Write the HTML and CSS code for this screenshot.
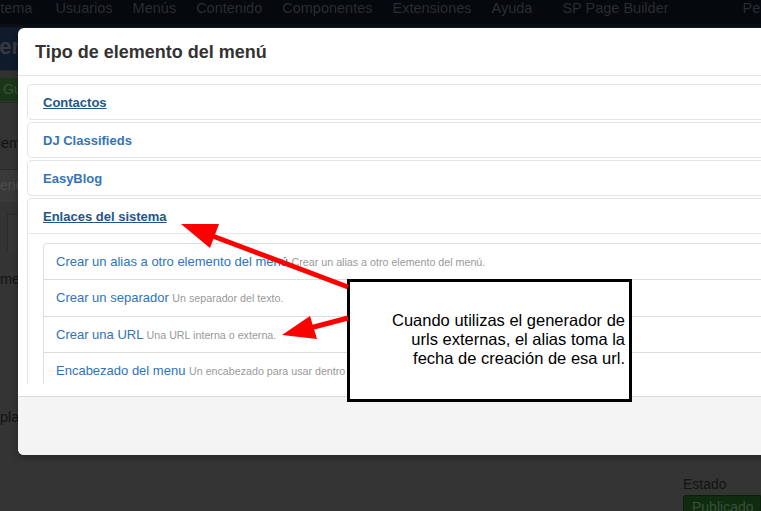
FILE: index.html
```html
<!DOCTYPE html>
<html lang="es">
<head>
<meta charset="utf-8">
<title>Tipo de elemento del menú</title>
<link rel="stylesheet" href="styles.css">
</head>
<body>
<div class="admin">
  <nav class="topnav">
    <span class="nav-item first">Sistema</span>
    <span class="nav-item">Usuarios</span>
    <span class="nav-item">Menús</span>
    <span class="nav-item">Contenido</span>
    <span class="nav-item">Componentes</span>
    <span class="nav-item">Extensiones</span>
    <span class="nav-item wide">Ayuda</span>
    <span class="nav-item sp">SP Page Builder</span>
    <span class="nav-item">Perfil</span>
  </nav>
  <header class="titlebar"><h1 class="page-title">Menú: Editar elemento</h1></header>
  <div class="toolbar"><span class="btn-save">Guardar</span></div>
  <div class="content">
    <div class="left-col">
      <div class="lbl lbl-first">Elemento</div>
      <div class="fake-input">General</div>
      <div class="fake-tab"></div>
      <div class="lbl lbl-menu">menú</div>
      <div class="lbl lbl-tpl">plantilla</div>
    </div>
    <div class="right-col">
      <div class="lbl-estado">Estado</div>
      <div class="btn-status">Publicado</div>
    </div>
  </div>
</div>

<div class="modal">
  <div class="modal-header"><h3 class="modal-title">Tipo de elemento del menú</h3></div>
  <div class="modal-body">
    <div class="scroll">
      <div class="group"><a class="toggle active">Contactos</a></div>
      <div class="group"><a class="toggle">DJ Classifieds</a></div>
      <div class="group"><a class="toggle">EasyBlog</a></div>
      <div class="group">
        <a class="toggle active">Enlaces del sistema</a>
        <div class="inner">
          <ul class="types">
            <li><a class="type"><span>Crear un alias a otro elemento del menú</span> <small class="desc">Crear un alias a otro elemento del menú.</small></a></li>
            <li><a class="type"><span>Crear un separador</span> <small class="desc">Un separador del texto.</small></a></li>
            <li><a class="type"><span>Crear una URL</span> <small class="desc">Una URL interna o externa.</small></a></li>
            <li><a class="type"><span>Encabezado del menu</span> <small class="desc">Un encabezado para usar dentro de los menús.</small></a></li>
            <li><a class="type"><span>Envoltura del iframe</span> <small class="desc">Muestra una URL en un iframe.</small></a></li>
          </ul>
        </div>
      </div>
    </div>
  </div>
  <div class="modal-footer"></div>
</div>

<div class="note">Cuando utilizas el generador de<br>urls externas, el alias toma la<br>fecha de creación de esa url.</div>

<svg class="arrows" width="761" height="511" viewBox="0 0 761 511">
  <line x1="348" y1="287" x2="210" y2="235" stroke="#ff0000" stroke-width="5"/>
  <polygon points="181,224 219,224 210,248" fill="#ff0000"/>
  <line x1="348" y1="318" x2="310" y2="328" stroke="#ff0000" stroke-width="5"/>
  <polygon points="282,335 310,316 317,339" fill="#ff0000"/>
</svg>
</body>
</html>
```

FILE: styles.css
```css
html, body {
  margin: 0;
  padding: 0;
}
body {
  width: 761px;
  height: 511px;
  overflow: hidden;
  position: relative;
  background: #343434;
  font-family: "Liberation Sans", Arial, sans-serif;
}

/* background admin page (dimmed) */
.topnav {
  height: 24px;
  background: #05080c;
  display: flex;
  align-items: flex-start;
  white-space: nowrap;
  font-size: 14.5px;
  line-height: 16px;
  color: #2a2d31;
  overflow: hidden;
}
.nav-item { margin-right: 20px; }
.nav-item.first { margin-left: -20px; margin-right: 23px; }
.nav-item.wide { margin-right: 30px; }
.nav-item.sp { margin-right: 74px; }

.titlebar {
  height: 46px;
  background: #0f1b2a;
  border-top: 3px solid #0a0f16;
  box-sizing: border-box;
  overflow: hidden;
}
.page-title {
  margin: 0 0 0 -19px;
  font-size: 22px;
  line-height: 40px;
  color: #363a40;
  white-space: nowrap;
}
.toolbar {
  height: 33px;
  background: #313131;
  border-top: 1px solid #262626;
  border-bottom: 1px solid #2a2a2a;
  box-sizing: border-box;
  padding-top: 7px;
}
.btn-save {
  display: inline-block;
  height: 23px;
  line-height: 23px;
  padding: 0 12px 0 3px;
  background: #1a3618;
  color: #375336;
  font-size: 14px;
  border-radius: 0 3px 3px 0;
}
.content {
  display: flex;
  justify-content: space-between;
}
.left-col { width: 120px; }
.lbl {
  font-size: 14.5px;
  line-height: 18px;
  color: #121212;
  white-space: nowrap;
}
.lbl-first { margin: 31px 0 0 -12px; }
.fake-input {
  margin-top: 17px;
  height: 33px;
  box-sizing: border-box;
  border-top: 1px solid #2a2a2a;
  background: #393939;
  color: #4e4e4e;
  font-size: 14px;
  line-height: 30px;
  margin-left: -11px;
}
.fake-tab {
  margin: 12px 0 0 7px;
  height: 36px;
  border-left: 1px solid #2a2a2a;
  border-top: 1px solid #2a2a2a;
  background: #363636;
}
.lbl-menu { margin-top: 19px; }
.lbl-tpl { margin-top: 120px; }

.right-col {
  width: 78px;
  padding-top: 372px;
}
.lbl-estado {
  font-size: 14px;
  line-height: 18px;
  color: #131313;
}
.btn-status {
  margin-top: 2px;
  height: 24px;
  background: #0f2b10;
  border: 1px solid #0b200c;
  border-radius: 3px 0 0 3px;
  color: #37513a;
  font-size: 14px;
  line-height: 22px;
  padding-left: 8px;
}

/* modal */
.modal {
  position: absolute;
  left: 18px;
  top: 28px;
  width: 820px;
  height: 427px;
  background: #fff;
  border-radius: 6px;
  box-shadow: 0 3px 7px rgba(0, 0, 0, 0.3);
  display: flex;
  flex-direction: column;
  overflow: hidden;
}
.modal-header {
  padding: 9px 17px 8px;
  border-bottom: 1px solid #e5e5e5;
}
.modal-title {
  margin: 0;
  font-size: 18px;
  font-weight: bold;
  line-height: 30px;
  color: #333;
}
.modal-body {
  height: 320px;
  box-sizing: border-box;
  padding: 8px 0 12px 9px;
}
.scroll {
  height: 300px;
  overflow: hidden;
}
.group {
  border: 1px solid #e5e5e5;
  border-radius: 4px;
  margin-bottom: 2px;
}
.toggle {
  display: block;
  padding: 9px 15px 7px;
  line-height: 18px;
  font-size: 13px;
  font-weight: bold;
  color: #3575b6;
  text-decoration: none;
}
.toggle.active {
  color: #22568a;
  text-decoration: underline;
}
.inner {
  border-top: 1px solid #e5e5e5;
  padding: 9px 15px;
}
.types {
  list-style: none;
  margin: 0;
  padding: 0;
}
.type {
  display: block;
  padding: 9px 12px 8px;
  border: 1px solid #ddd;
  margin-bottom: -1px;
  font-size: 13px;
  line-height: 18.3px;
  color: #2f73b8;
  text-decoration: none;
  white-space: nowrap;
}
.types li:first-child .type { border-radius: 4px 4px 0 0; }
.desc {
  font-size: 10.7px;
  color: #999;
}
.modal-footer {
  flex: 0 0 auto;
  height: 58px;
  border-top: 1px solid #ddd;
  background: #f4f4f4;
}

/* annotation */
.note {
  position: absolute;
  left: 347px;
  top: 279px;
  width: 285px;
  height: 123px;
  box-sizing: border-box;
  border: 3px solid #000;
  background: #fff;
  padding: 29px 4px 0 0;
  text-align: right;
  font-size: 16.5px;
  line-height: 19px;
  color: #000;
}
.arrows {
  position: absolute;
  left: 0;
  top: 0;
  pointer-events: none;
}
```
